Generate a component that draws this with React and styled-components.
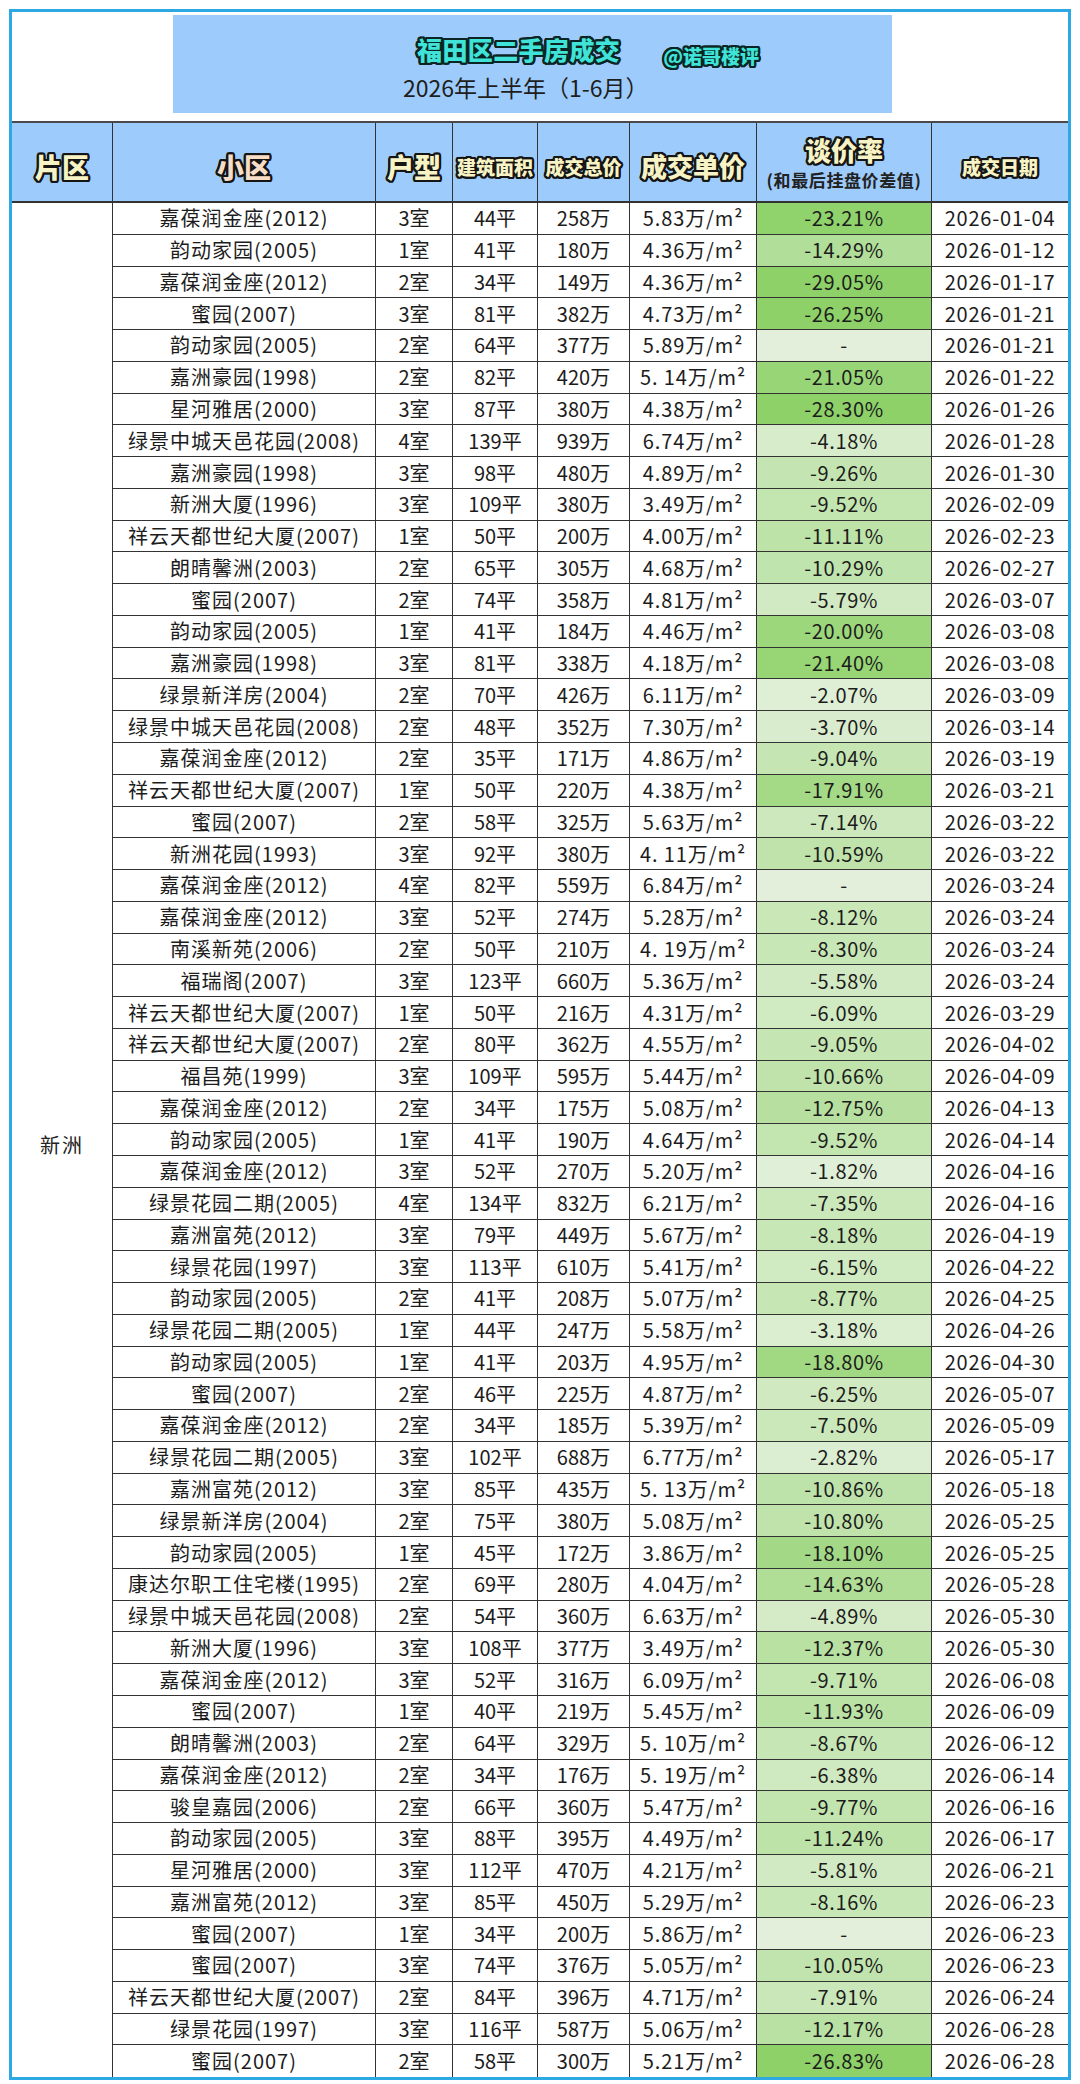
import React from 'react'
import styled, { createGlobalStyle } from 'styled-components'

// ring of text-shadows, used as an outline round the heavy header lettering
const ring = (w, c) =>
  Array.from({ length: 16 }, (_, i) => {
    const a = (i * Math.PI) / 8
    return `${(Math.cos(a) * w).toFixed(2)}px ${(Math.sin(a) * w).toFixed(2)}px 0 ${c}`
  }).join(', ')

const GlobalStyle = createGlobalStyle`
  body {
    margin: 0;
    background: #fff;
    font-family: "Noto Sans CJK SC", "Noto Sans", sans-serif;
    color: #1c1c1c;
  }
`

const Frame = styled.div`
  box-sizing: border-box;
  width: 1062px;
  margin: 9px 0 0 9px;
  border: 3px solid #2ea8e3;
  background: #fff;
`

const TitleArea = styled.div`
  box-sizing: border-box;
  height: 111px;
  padding: 3px 0 0 161px;
  border-bottom: 2px solid #4a4a4a;
`

const TitleBox = styled.div`
  width: 719px;
  height: 98px;
  background: #9dcbfb;
  display: flex;
  flex-direction: column;
`

const TitleLine = styled.div`
  display: flex;
  align-items: flex-end;
  gap: 43px;
  padding: 22px 0 0 244px;
`

const MainTitle = styled.div`
  font-size: 25px;
  line-height: 1;
  font-weight: 900;
  letter-spacing: 0.4px;
  color: #3fe3d8;
  text-shadow: ${ring(2.4, '#0c2424')};
`

const Handle = styled.div`
  font-size: 19px;
  line-height: 1;
  font-weight: 900;
  color: #3fe3d8;
  margin-bottom: -3px;
  text-shadow: ${ring(2.2, '#0c2424')};
`

const SubTitle = styled.div`
  padding: 14px 0 0 230px;
  font-size: 23px;
  line-height: 1;
  color: #1e1e1e;
`

const columns = '263px 77px 85px 92px 127px 175px 136px'

const HeaderRow = styled.div`
  display: grid;
  grid-template-columns: 101px ${columns};
  height: 80px;
  box-sizing: border-box;
  background: #9dcbfb;
  border-bottom: 2px solid #333;
`

const HeadCell = styled.div`
  box-sizing: border-box;
  display: flex;
  flex-direction: column;
  align-items: center;
  justify-content: center;
  padding-top: ${p => (p.$stack ? 0 : 8)}px;
  border-right: ${p => (p.$last ? 'none' : '1.5px solid #333')};
`

const HeadText = styled.span`
  font-size: ${p => p.$size}px;
  line-height: 1;
  font-weight: 900;
  color: ${p => p.$fill || '#f8f3c4'};
  text-shadow: ${ring(2.2, '#151515')};
  white-space: nowrap;
`

const HeadNote = styled.span`
  margin-top: 8px;
  font-size: 17px;
  line-height: 1;
  font-weight: 700;
  letter-spacing: 0.6px;
  color: #222;
  white-space: nowrap;
`

const Body = styled.div`
  display: flex;
`

const DistrictCell = styled.div`
  box-sizing: border-box;
  width: 101px;
  flex-shrink: 0;
  display: flex;
  align-items: center;
  justify-content: center;
  padding-top: 8px;
  border-right: 1.5px solid #333;
  font-size: 20px;
  letter-spacing: 2px;
  color: #222;
`

const Rows = styled.div`
  flex: 1;
  display: flex;
  flex-direction: column;
`

const Row = styled.div`
  box-sizing: border-box;
  display: grid;
  grid-template-columns: ${columns};
  height: 31.78px;
  border-bottom: 1.5px solid #333;

  &:last-child {
    border-bottom: none;
  }
`

const Cell = styled.div`
  box-sizing: border-box;
  display: flex;
  align-items: center;
  justify-content: center;
  font-size: 20px;
  line-height: 1;
  white-space: nowrap;
  letter-spacing: ${p => p.$spacing || 0}px;
  background: ${p => p.$bg || 'transparent'};
  border-right: ${p => (p.$last ? 'none' : '1.5px solid #333')};
`

const data = `嘉葆润金座(2012)|3室|44平|258万|5.83万/m²|-23.21%|2026-01-04
韵动家园(2005)|1室|41平|180万|4.36万/m²|-14.29%|2026-01-12
嘉葆润金座(2012)|2室|34平|149万|4.36万/m²|-29.05%|2026-01-17
蜜园(2007)|3室|81平|382万|4.73万/m²|-26.25%|2026-01-21
韵动家园(2005)|2室|64平|377万|5.89万/m²|-|2026-01-21
嘉洲豪园(1998)|2室|82平|420万|5. 14万/m²|-21.05%|2026-01-22
星河雅居(2000)|3室|87平|380万|4.38万/m²|-28.30%|2026-01-26
绿景中城天邑花园(2008)|4室|139平|939万|6.74万/m²|-4.18%|2026-01-28
嘉洲豪园(1998)|3室|98平|480万|4.89万/m²|-9.26%|2026-01-30
新洲大厦(1996)|3室|109平|380万|3.49万/m²|-9.52%|2026-02-09
祥云天都世纪大厦(2007)|1室|50平|200万|4.00万/m²|-11.11%|2026-02-23
朗晴馨洲(2003)|2室|65平|305万|4.68万/m²|-10.29%|2026-02-27
蜜园(2007)|2室|74平|358万|4.81万/m²|-5.79%|2026-03-07
韵动家园(2005)|1室|41平|184万|4.46万/m²|-20.00%|2026-03-08
嘉洲豪园(1998)|3室|81平|338万|4.18万/m²|-21.40%|2026-03-08
绿景新洋房(2004)|2室|70平|426万|6.11万/m²|-2.07%|2026-03-09
绿景中城天邑花园(2008)|2室|48平|352万|7.30万/m²|-3.70%|2026-03-14
嘉葆润金座(2012)|2室|35平|171万|4.86万/m²|-9.04%|2026-03-19
祥云天都世纪大厦(2007)|1室|50平|220万|4.38万/m²|-17.91%|2026-03-21
蜜园(2007)|2室|58平|325万|5.63万/m²|-7.14%|2026-03-22
新洲花园(1993)|3室|92平|380万|4. 11万/m²|-10.59%|2026-03-22
嘉葆润金座(2012)|4室|82平|559万|6.84万/m²|-|2026-03-24
嘉葆润金座(2012)|3室|52平|274万|5.28万/m²|-8.12%|2026-03-24
南溪新苑(2006)|2室|50平|210万|4. 19万/m²|-8.30%|2026-03-24
福瑞阁(2007)|3室|123平|660万|5.36万/m²|-5.58%|2026-03-24
祥云天都世纪大厦(2007)|1室|50平|216万|4.31万/m²|-6.09%|2026-03-29
祥云天都世纪大厦(2007)|2室|80平|362万|4.55万/m²|-9.05%|2026-04-02
福昌苑(1999)|3室|109平|595万|5.44万/m²|-10.66%|2026-04-09
嘉葆润金座(2012)|2室|34平|175万|5.08万/m²|-12.75%|2026-04-13
韵动家园(2005)|1室|41平|190万|4.64万/m²|-9.52%|2026-04-14
嘉葆润金座(2012)|3室|52平|270万|5.20万/m²|-1.82%|2026-04-16
绿景花园二期(2005)|4室|134平|832万|6.21万/m²|-7.35%|2026-04-16
嘉洲富苑(2012)|3室|79平|449万|5.67万/m²|-8.18%|2026-04-19
绿景花园(1997)|3室|113平|610万|5.41万/m²|-6.15%|2026-04-22
韵动家园(2005)|2室|41平|208万|5.07万/m²|-8.77%|2026-04-25
绿景花园二期(2005)|1室|44平|247万|5.58万/m²|-3.18%|2026-04-26
韵动家园(2005)|1室|41平|203万|4.95万/m²|-18.80%|2026-04-30
蜜园(2007)|2室|46平|225万|4.87万/m²|-6.25%|2026-05-07
嘉葆润金座(2012)|2室|34平|185万|5.39万/m²|-7.50%|2026-05-09
绿景花园二期(2005)|3室|102平|688万|6.77万/m²|-2.82%|2026-05-17
嘉洲富苑(2012)|3室|85平|435万|5. 13万/m²|-10.86%|2026-05-18
绿景新洋房(2004)|2室|75平|380万|5.08万/m²|-10.80%|2026-05-25
韵动家园(2005)|1室|45平|172万|3.86万/m²|-18.10%|2026-05-25
康达尔职工住宅楼(1995)|2室|69平|280万|4.04万/m²|-14.63%|2026-05-28
绿景中城天邑花园(2008)|2室|54平|360万|6.63万/m²|-4.89%|2026-05-30
新洲大厦(1996)|3室|108平|377万|3.49万/m²|-12.37%|2026-05-30
嘉葆润金座(2012)|3室|52平|316万|6.09万/m²|-9.71%|2026-06-08
蜜园(2007)|1室|40平|219万|5.45万/m²|-11.93%|2026-06-09
朗晴馨洲(2003)|2室|64平|329万|5. 10万/m²|-8.67%|2026-06-12
嘉葆润金座(2012)|2室|34平|176万|5. 19万/m²|-6.38%|2026-06-14
骏皇嘉园(2006)|2室|66平|360万|5.47万/m²|-9.77%|2026-06-16
韵动家园(2005)|3室|88平|395万|4.49万/m²|-11.24%|2026-06-17
星河雅居(2000)|3室|112平|470万|4.21万/m²|-5.81%|2026-06-21
嘉洲富苑(2012)|3室|85平|450万|5.29万/m²|-8.16%|2026-06-23
蜜园(2007)|1室|34平|200万|5.86万/m²|-|2026-06-23
蜜园(2007)|3室|74平|376万|5.05万/m²|-10.05%|2026-06-23
祥云天都世纪大厦(2007)|2室|84平|396万|4.71万/m²|-7.91%|2026-06-24
绿景花园(1997)|3室|116平|587万|5.06万/m²|-12.17%|2026-06-28
蜜园(2007)|2室|58平|300万|5.21万/m²|-26.83%|2026-06-28`
  .split('\n')
  .map(line => line.split('|'))

// green colour scale: deeper green for a bigger discount, full green from about -24%
const rateBg = rate => {
  if (rate === '-') return '#e3efda'
  const t = Math.min(1, Math.abs(parseFloat(rate)) / 24)
  const mix = (a, b) => Math.round(a + (b - a) * t)
  return `rgb(${mix(231, 141)}, ${mix(242, 209)}, ${mix(224, 104)})`
}

export default function App() {
  return (
    <>
      <GlobalStyle />
      <Frame>
        <TitleArea>
          <TitleBox>
            <TitleLine>
              <MainTitle>福田区二手房成交</MainTitle>
              <Handle>@诺哥楼评</Handle>
            </TitleLine>
            <SubTitle>2026年上半年（1-6月）</SubTitle>
          </TitleBox>
        </TitleArea>

        <HeaderRow>
          <HeadCell><HeadText $size={27}>片区</HeadText></HeadCell>
          <HeadCell><HeadText $size={27} $fill="#f7dcc6">小区</HeadText></HeadCell>
          <HeadCell><HeadText $size={27}>户型</HeadText></HeadCell>
          <HeadCell><HeadText $size={19}>建筑面积</HeadText></HeadCell>
          <HeadCell><HeadText $size={19}>成交总价</HeadText></HeadCell>
          <HeadCell><HeadText $size={26}>成交单价</HeadText></HeadCell>
          <HeadCell $stack>
            <HeadText $size={26}>谈价率</HeadText>
            <HeadNote>(和最后挂盘价差值)</HeadNote>
          </HeadCell>
          <HeadCell $last><HeadText $size={19}>成交日期</HeadText></HeadCell>
        </HeaderRow>

        <Body>
          <DistrictCell>新洲</DistrictCell>
          <Rows>
            {data.map(([name, rooms, area, total, unit, rate, date], i) => (
              <Row key={i}>
                <Cell $spacing={1}>{name}</Cell>
                <Cell>{rooms}</Cell>
                <Cell>{area}</Cell>
                <Cell>{total}</Cell>
                <Cell $spacing={0.9}>{unit}</Cell>
                <Cell $spacing={0.6} $bg={rateBg(rate)}>{rate}</Cell>
                <Cell $spacing={0.8} $last>{date}</Cell>
              </Row>
            ))}
          </Rows>
        </Body>
      </Frame>
    </>
  )
}
